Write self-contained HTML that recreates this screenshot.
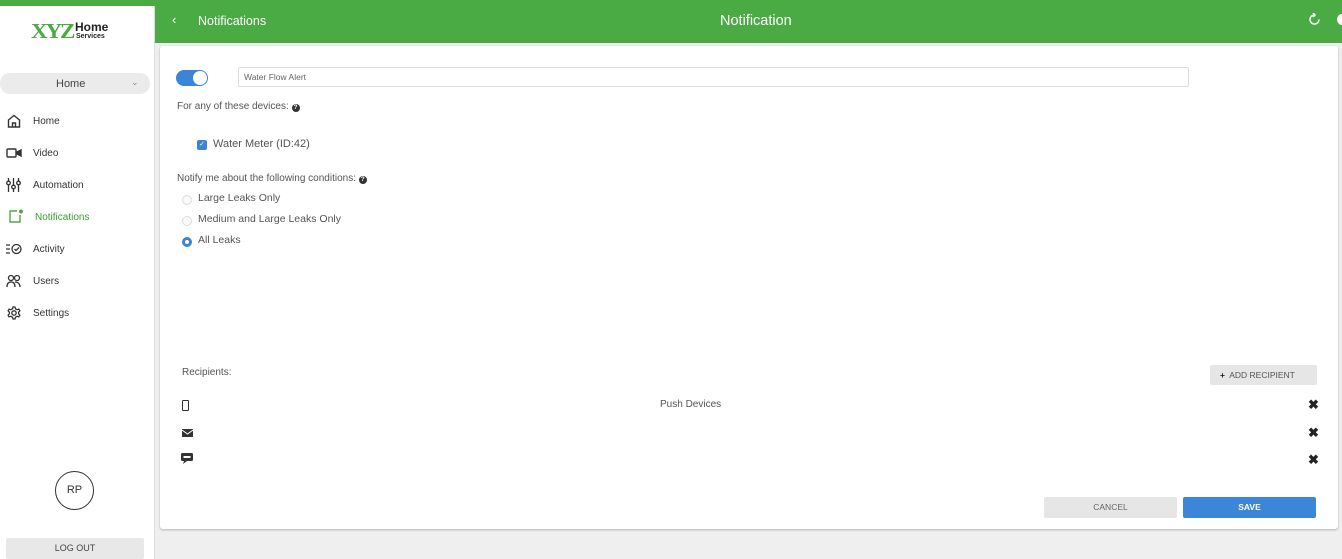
<!DOCTYPE html>
<html><head><meta charset="utf-8"><style>
*{box-sizing:border-box;margin:0;padding:0}
body{width:1342px;height:559px;overflow:hidden;background:#efefef;font-family:"Liberation Sans",sans-serif;color:#333;position:relative}
.abs{position:absolute}
.side{left:0;top:0;width:155px;height:559px;background:#fff;border-right:1px solid #ddd}
.topg{left:0;top:0;width:1342px;height:6px;background:#4aaa43}
.bar{left:155px;top:0;width:1187px;height:43px;background:#4aaa43;color:#fff}
.nav{font-size:10px;color:#333}
.card{left:160px;top:46px;width:1178px;height:483px;background:#fff;border-radius:3px;box-shadow:0 1px 2px rgba(0,0,0,.25)}
.t{font-size:10px;color:#555;white-space:nowrap}
.radio{width:10px;height:10px;border:1px solid #ddd;border-radius:50%;background:#fafafa}
.x{font-size:13px;font-weight:bold;color:#222}
.q{display:inline-block;width:8px;height:8px;border-radius:50%;background:#333;color:#fff;font-size:6.5px;font-weight:bold;text-align:center;line-height:8px;vertical-align:0}
</style></head><body>
<div class="abs side"></div>
<div class="abs topg"></div>
<div class="abs" style="left:31px;top:21px;font-family:'Liberation Serif',serif;font-weight:900;font-size:21px;color:#4aaa43;letter-spacing:-2px;line-height:20px;transform:scaleX(1.1);transform-origin:left">XYZ</div>
<div class="abs" style="left:75px;top:22px;font-weight:bold;font-size:12px;line-height:11px;color:#222">Home</div>
<div class="abs" style="left:76px;top:33px;font-weight:bold;font-size:7px;line-height:7px;color:#222">Services</div>
<div class="abs" style="left:0;top:73px;width:150px;height:21px;background:#ebebeb;border-radius:10px"></div>
<div class="abs t" style="left:56px;top:78px;font-size:11px;color:#444">Home</div>
<div class="abs" style="left:131px;top:77px;font-size:9px;color:#888">&#8964;</div>
<svg class="abs" style="left:7px;top:114px" width="14" height="14" viewBox="0 0 14 14" fill="none" stroke="#333" stroke-width="1.4"><path d="M1.5 6L7 1.5 12.5 6V13H1.5Z M5.5 13V9h3v4"/></svg>
<div class="abs nav" style="left:33px;top:116px">Home</div>
<svg class="abs" style="left:6px;top:147px" width="16" height="12" viewBox="0 0 16 12" fill="none" stroke="#333" stroke-width="1.4"><rect x="1" y="2" width="9" height="8" rx="1"/><path d="M11 5l4-2v6l-4-2z" fill="#333"/></svg>
<div class="abs nav" style="left:33px;top:148px">Video</div>
<svg class="abs" style="left:6px;top:178px" width="15" height="14" viewBox="0 0 15 14" fill="none" stroke="#333" stroke-width="1.3"><path d="M2.5 0v14M7.5 0v14M12.5 0v14"/><circle cx="2.5" cy="5" r="1.8" fill="#fff"/><circle cx="7.5" cy="9" r="1.8" fill="#fff"/><circle cx="12.5" cy="5" r="1.8" fill="#fff"/></svg>
<div class="abs nav" style="left:33px;top:180px">Automation</div>
<svg class="abs" style="left:8px;top:209px" width="16" height="15" viewBox="0 0 16 15" fill="none" stroke="#4aaa43" stroke-width="1.4"><path d="M9 2H2v11h10V6"/><circle cx="13" cy="2.5" r="2" fill="#4aaa43" stroke="none"/></svg>
<div class="abs nav" style="left:35px;top:212px;color:#3a9a33">Notifications</div>
<svg class="abs" style="left:6px;top:243px" width="16" height="12" viewBox="0 0 16 12" fill="none" stroke="#333" stroke-width="1.3"><path d="M0 2h4M0 6h4M0 10h4"/><circle cx="10.5" cy="6" r="4.5"/><path d="M8.5 6l1.5 1.5 3-3"/></svg>
<div class="abs nav" style="left:33px;top:244px">Activity</div>
<svg class="abs" style="left:6px;top:274px" width="16" height="13" viewBox="0 0 16 13" fill="none" stroke="#333" stroke-width="1.3"><circle cx="5" cy="4" r="2.5"/><circle cx="11" cy="4" r="2.5"/><path d="M1 13c0-4 2-5 4-5s4 1 4 5M9 8c2 0 5 1 5 5"/></svg>
<div class="abs nav" style="left:33px;top:276px">Users</div>
<svg class="abs" style="left:7px;top:306px" width="14" height="14" viewBox="0 0 14 14" fill="none" stroke="#333" stroke-width="1.3"><circle cx="7" cy="7" r="2.2"/><path d="M6 1h2l.5 1.8 1.6.9 1.8-.6 1 1.7-1.3 1.4v1.6l1.3 1.4-1 1.7-1.8-.6-1.6.9L8 13H6l-.5-1.8-1.6-.9-1.8.6-1-1.7L2.4 7.8V6.2L1.1 4.8l1-1.7 1.8.6 1.6-.9z"/></svg>
<div class="abs nav" style="left:33px;top:308px">Settings</div>
<div class="abs" style="left:55px;top:471px;width:39px;height:39px;border:1.3px solid #333;border-radius:50%;text-align:center;line-height:36px;font-size:11px">RP</div>
<div class="abs" style="left:6px;top:538px;width:138px;height:21px;background:#e8e8e8;border-radius:2px;text-align:center;line-height:21px;font-size:9px;color:#444">LOG OUT</div>

<div class="abs bar"></div>
<div class="abs" style="left:172px;top:12px;color:#fff;font-size:13px">&lsaquo;</div>
<div class="abs" style="left:198px;top:14px;color:#fff;font-size:12.5px">Notifications</div>
<div class="abs" style="left:720px;top:13px;color:#fff;font-size:14.5px">Notification</div>
<svg class="abs" style="left:1308px;top:13px" width="13" height="13" viewBox="0 0 13 13" fill="none" stroke="#fff" stroke-width="1.5"><path d="M6.5 2A4.5 4.5 0 1 0 11 6.5"/><path d="M5 0l2 2-2 2" /></svg>
<div class="abs" style="left:1337px;top:14px;width:10px;height:11px;border-radius:50%;background:#fff"></div>

<div class="abs card"></div>
<div class="abs" style="left:176px;top:70px;width:32px;height:16px;border-radius:8px;background:#3c84d8"></div>
<div class="abs" style="left:193px;top:71px;width:14px;height:14px;border-radius:50%;background:#fff"></div>
<div class="abs" style="left:238px;top:67px;width:951px;height:20px;border:1px solid #ddd;border-radius:2px"></div>
<div class="abs t" style="left:244px;top:72px;font-size:8.5px;color:#666">Water Flow Alert</div>
<div class="abs t" style="left:177px;top:101px">For any of these devices: <span class="q">?</span></div>
<div class="abs" style="left:197px;top:140px;width:10px;height:10px;border-radius:2px;background:#3c84d8;color:#fff;font-size:7px;text-align:center;line-height:10px">&#10003;</div>
<div class="abs t" style="left:213px;top:138px;font-size:11px">Water Meter (ID:42)</div>
<div class="abs t" style="left:177px;top:173px">Notify me about the following conditions: <span class="q">?</span></div>
<div class="abs radio" style="left:182px;top:195px"></div>
<div class="abs t" style="left:198px;top:192px;font-size:10.5px">Large Leaks Only</div>
<div class="abs radio" style="left:182px;top:216px"></div>
<div class="abs t" style="left:198px;top:213px;font-size:10.5px">Medium and Large Leaks Only</div>
<div class="abs radio" style="left:182px;top:237px;border:3px solid #3c84d8;background:#fff"></div>
<div class="abs t" style="left:198px;top:234px;font-size:10.5px">All Leaks</div>

<div class="abs t" style="left:182px;top:367px">Recipients:</div>
<div class="abs" style="left:1210px;top:365px;width:107px;height:20px;background:#e6e6e6;border-radius:2px;font-size:8.5px;color:#555;line-height:20px;padding-left:10px"><b style="color:#222">+</b>&nbsp; ADD RECIPIENT</div>
<div class="abs" style="left:182px;top:400px;width:7px;height:11px;border:1.3px solid #333;border-radius:1px"></div>
<div class="abs t" style="left:660px;top:399px">Push Devices</div>
<div class="abs" style="left:182px;top:429px;width:11px;height:8px;background:#333"></div>
<svg class="abs" style="left:182px;top:429px" width="11" height="8"><path d="M0 1l5.5 4L11 1" stroke="#fff" fill="none"/></svg>
<svg class="abs" style="left:181px;top:453px" width="13" height="11" viewBox="0 0 13 11"><rect x="0" y="0" width="12" height="8" rx="1.5" fill="#333"/><path d="M3 8l-1 3 4-3z" fill="#333"/><rect x="2.5" y="3" width="7" height="2" fill="#fff"/></svg>
<div class="abs x" style="left:1308px;top:397px">&#10006;</div>
<div class="abs x" style="left:1308px;top:425px">&#10006;</div>
<div class="abs x" style="left:1308px;top:452px">&#10006;</div>
<div class="abs" style="left:1044px;top:497px;width:133px;height:21px;background:#e6e6e6;border-radius:2px;text-align:center;line-height:21px;font-size:8.5px;color:#666">CANCEL</div>
<div class="abs" style="left:1183px;top:497px;width:133px;height:21px;background:#3c86da;border-radius:2px;text-align:center;line-height:21px;font-size:8.5px;color:#fff;font-weight:bold">SAVE</div>
</body></html>
